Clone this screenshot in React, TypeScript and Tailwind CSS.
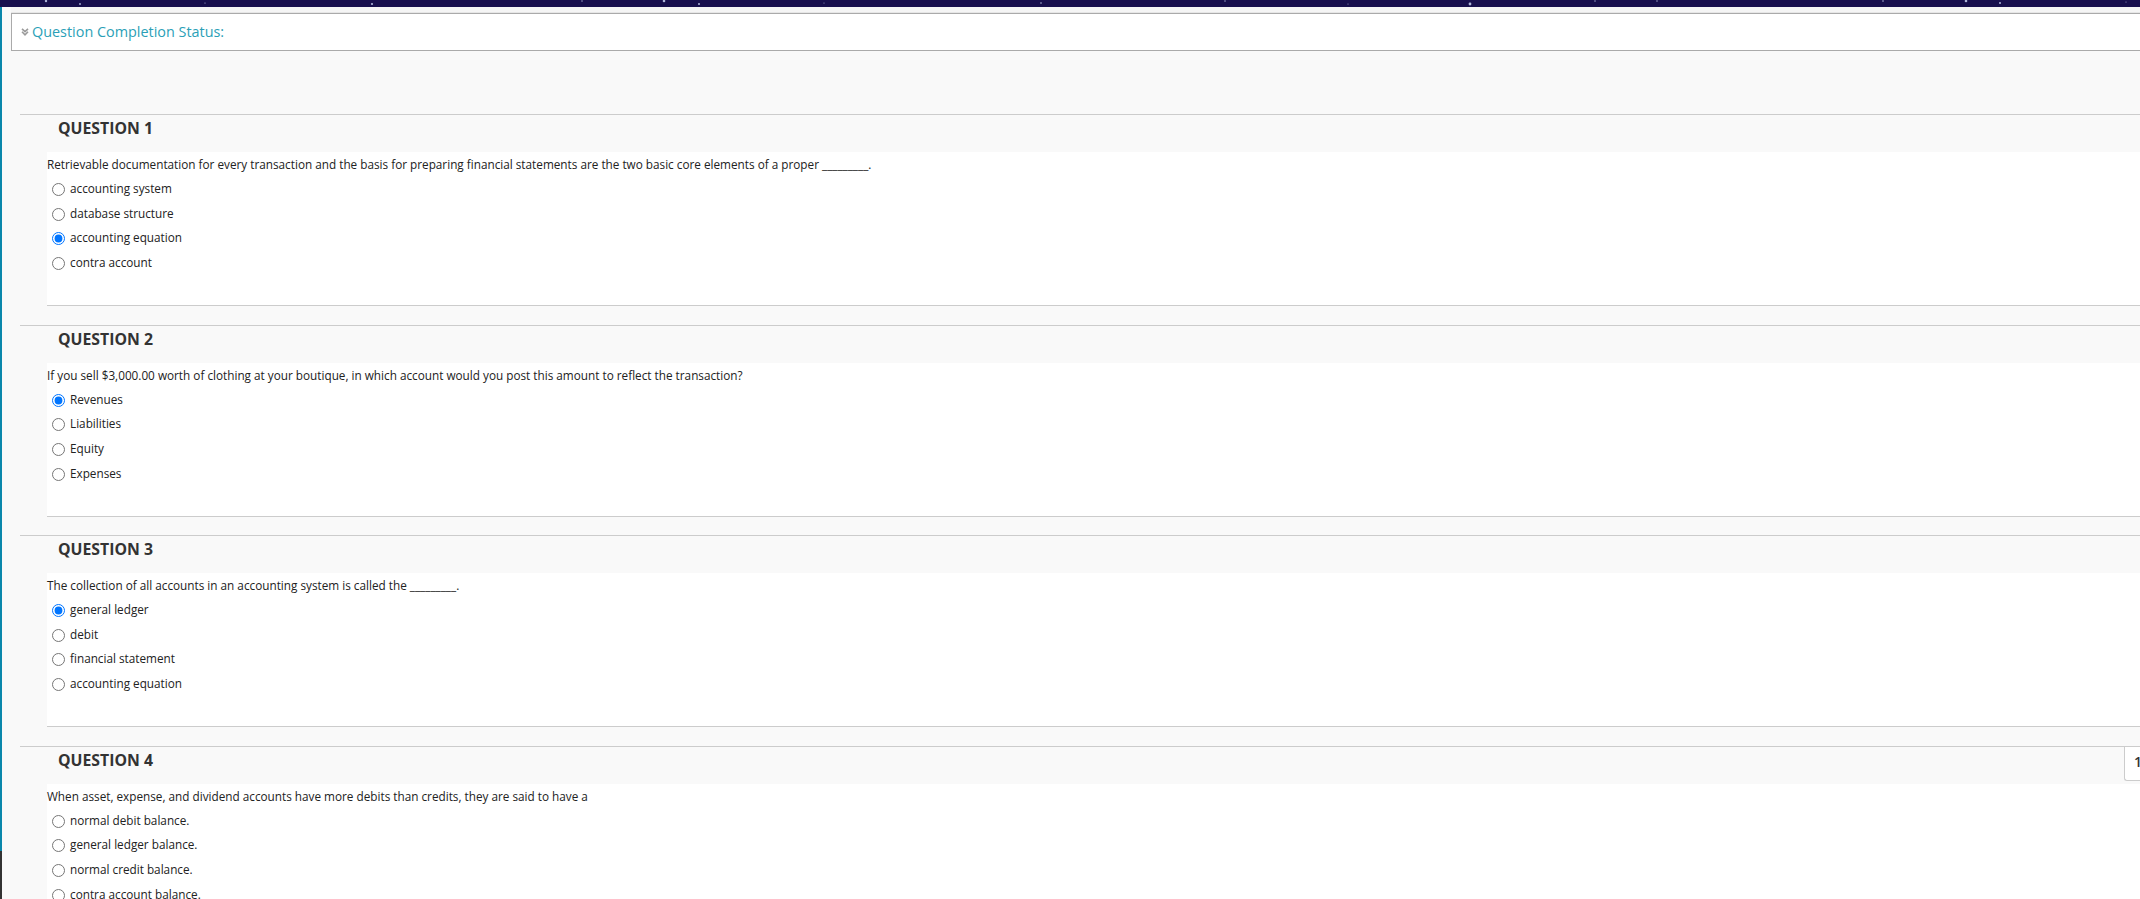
import React from "react";

const stars = [
  [46, 1, 1.2], [80, 4, 0.9], [205, 3, 0.6], [372, 4, 1.1], [582, 1, 0.7], [664, 1, 1.3], [699, 4, 1], [824, 3, 0.5],
  [1041, 3, 0.8], [1225, 1, 0.7], [1348, 4, 0.5], [1470, 4, 1.4], [1595, 1, 0.7], [1657, 1, 0.7], [1883, 1, 0.8],
  [1966, 1, 1.3], [2000, 3, 1], [2126, 2, 0.5],
];

const questions = [
  {
    title: "QUESTION 1",
    text: "Retrievable documentation for every transaction and the basis for preparing financial statements are the two basic core elements of a proper _________.",
    answers: ["accounting system", "database structure", "accounting equation", "contra account"],
    checked: 2,
  },
  {
    title: "QUESTION 2",
    text: "If you sell $3,000.00 worth of clothing at your boutique, in which account would you post this amount to reflect the transaction?",
    answers: ["Revenues", "Liabilities", "Equity", "Expenses"],
    checked: 0,
  },
  {
    title: "QUESTION 3",
    text: "The collection of all accounts in an accounting system is called the _________.",
    answers: ["general ledger", "debit", "financial statement", "accounting equation"],
    checked: 0,
  },
  {
    title: "QUESTION 4",
    text: "When asset, expense, and dividend accounts have more debits than credits, they are said to have a",
    answers: ["normal debit balance.", "general ledger balance.", "normal credit balance.", "contra account balance."],
    checked: -1,
  },
];

const Question = ({ q, last }: { q: (typeof questions)[number]; last: boolean }) => {
  return (
    <section className={`relative ${last ? "" : "mb-[18.5px]"}`}>
      <div className="h-[38px] border-t border-[#cccccc] pl-[38px] pt-[1px] text-[15.8px] leading-[24px] font-bold text-[#333333]">
        {q.title}
      </div>
      {last && (
        <div className="absolute right-0 top-0 h-[35px] w-[16px] overflow-hidden rounded-bl-[3px] border-t border-b border-l border-[#cccccc] bg-white pl-[9px] pt-[4px] text-[14px] font-semibold text-[#333333]">
          1
        </div>
      )}
      <div className={`ml-[27px] bg-white pt-[1px] ${last ? "h-[200px]" : "h-[154px] border-b border-[#cccccc]"}`}>
        <p className="h-[25px] text-[11.75px] leading-[22px] text-[#222222]">{q.text}</p>
        <ul className="flex flex-col">
          {q.answers.map((a, i) => (
            <li key={a} className="flex h-[24.7px] items-start text-[11.75px] leading-[20px] text-[#222222]">
              <input type="radio" name={q.title} defaultChecked={i === q.checked} className="mt-[5px] ml-[5px] mr-[5px] h-[13px] w-[13px]" />
              <span>{a}</span>
            </li>
          ))}
        </ul>
      </div>
    </section>
  );
};

const App = () => {
  return (
    <div className="flex h-[899px] w-[2140px] flex-col overflow-hidden bg-white font-['Open_Sans',sans-serif]">
      <svg className="block h-[7px] w-[2140px] shrink-0" viewBox="0 0 2140 7">
        <rect width="2140" height="7" fill="#170f4d" />
        {stars.map(([x, y, r]) => (
          <circle key={x} cx={x} cy={y} r={r} fill="#c9d2f2" opacity="0.85" />
        ))}
      </svg>
      <div className="flex min-h-0 flex-1">
        <div className="flex w-[2px] shrink-0 flex-col bg-[#0a87ab]">
          <div className="mt-auto h-[48px] bg-[#333333]" />
        </div>
        <main className="min-w-0 flex-1 bg-[#f9f9f9]">
          <div className="ml-[9px] h-[6px] border-b border-[#e6e6e6] bg-[#f5f5f5]" />
          <div className="-mr-[8px] ml-[9px] flex h-[38px] items-center border border-[#aaaaaa] bg-white pl-[9px] text-[14.4px] text-[#2b9fb7]">
            <svg className="mr-[3px] h-[8px] w-[8px]" viewBox="0 0 8 8" fill="none" stroke="#9a9a9a" strokeWidth="1.6">
              <path d="M1 0.8L4 3.6L7 0.8" />
              <path d="M1 3.8L4 6.8L7 3.8" />
            </svg>
            Question Completion Status:
          </div>
          <div className="ml-[18px] mt-[63px]">
            {questions.map((q, i) => (
              <Question key={q.title} q={q} last={i === questions.length - 1} />
            ))}
          </div>
        </main>
      </div>
    </div>
  );
};

export default App;
